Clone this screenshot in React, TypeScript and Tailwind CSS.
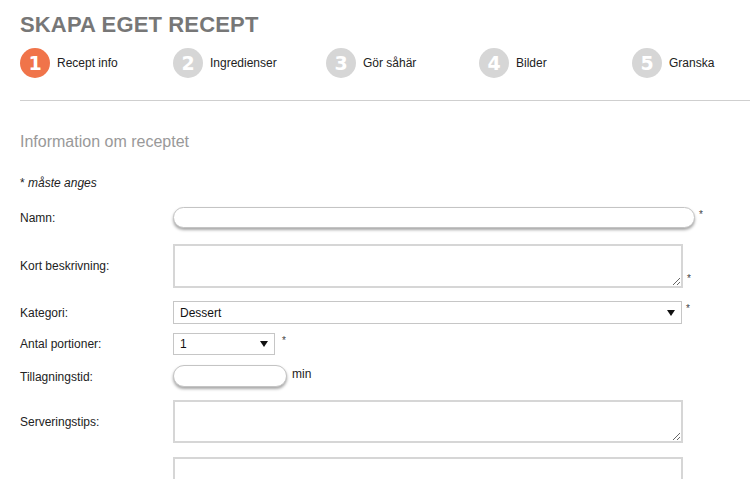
import React from 'react';

const steps = ['Recept info', 'Ingredienser', 'Gör såhär', 'Bilder', 'Granska'];

const Req = ({ className = '' }: { className?: string }) => (
  <span className={`text-[10px] text-[#444] ml-1 ${className}`}>*</span>
);

const Pill: React.FC<{ className: string }> = ({ className }) => (
  <div className={`rounded-full border border-[#c4c4c4] bg-white shadow-[0_2px_3px_rgba(0,0,0,0.35)] ${className}`} />
);

const Select: React.FC<{ value: string; className: string }> = ({ value, className }) => (
  <div className={`flex items-center justify-between border border-[#c6c6c6] bg-white pl-[6px] pr-[6px] text-[12px] text-[#111] ${className}`}>
    <span>{value}</span>
    <svg width="8" height="6" viewBox="0 0 8 6">
      <path d="M0 0h8L4 6z" fill="#111" />
    </svg>
  </div>
);

const Area: React.FC<{ className?: string }> = ({ className = '' }) => (
  <textarea className={`block w-[510px] h-[43px] border-2 border-[#d6d6d6] bg-white outline-none ${className}`} />
);

export default function App() {
  return (
    <div className="w-[750px] h-[479px] overflow-hidden bg-white font-['Liberation_Sans',Arial,sans-serif] text-[#333]">
      <div className="w-[800px] pl-5 pt-[13px]">
        <h1 className="text-[22px] leading-[24px] font-bold text-[#777] tracking-[0.15px]">SKAPA EGET RECEPT</h1>

        <div className="flex mt-[11px]">
          {steps.map((s, i) => (
            <div key={s} className="w-[153px] flex items-center gap-[7px]">
              <div
                className={`w-[30px] h-[30px] rounded-full flex items-center justify-center text-white font-bold text-[19px] font-['DejaVu_Sans',sans-serif] ${
                  i === 0 ? 'bg-[#f0744a]' : 'bg-[#d6d6d6]'
                }`}
              >
                {i + 1}
              </div>
              <span className="text-[12px] text-[#222]">{s}</span>
            </div>
          ))}
        </div>

        <div className="mt-[22px] h-px bg-[#cfcfcf]" />

        <h2 className="mt-[29px] text-[16px] text-[#999]">Information om receptet</h2>

        <p className="mt-[20px] text-[12px] text-[#222]">
          * <i>måste anges</i>
        </p>

        <div className="grid grid-cols-[153px_1fr] items-center mt-[15px] text-[12px] text-[#222]">
          <label>Namn:</label>
          <div className="flex items-start h-[21px]">
            <Pill className="w-[522px] h-[21px]" />
            <Req className="mt-0" />
          </div>

          <label className="mt-[16px]">Kort beskrivning:</label>
          <div className="flex items-end mt-[16px]">
            <Area className="!h-[44px]" />
            <Req className="mb-[2px]" />
          </div>

          <label className="mt-[13px]">Kategori:</label>
          <div className="flex items-start mt-[13px]">
            <Select value="Dessert" className="w-[509px] h-[23px]" />
            <Req />
          </div>

          <label className="mt-[9px]">Antal portioner:</label>
          <div className="flex items-start mt-[9px]">
            <Select value="1" className="w-[102px] h-[22px]" />
            <Req className="ml-[7px]" />
          </div>

          <label className="mt-[12px]">Tillagningstid:</label>
          <div className="flex items-center gap-[5px] mt-[10px]">
            <Pill className="w-[114px] h-[22px]" />
            <span className="-mt-[4px]">min</span>
          </div>

          <label className="mt-[13px]">Serveringstips:</label>
          <div className="mt-[13px]">
            <Area />
          </div>

          <label className="mt-[14px] self-end translate-y-[14px]">Variationstips:</label>
          <div className="mt-[14px]">
            <Area />
          </div>
        </div>
      </div>
    </div>
  );
}
